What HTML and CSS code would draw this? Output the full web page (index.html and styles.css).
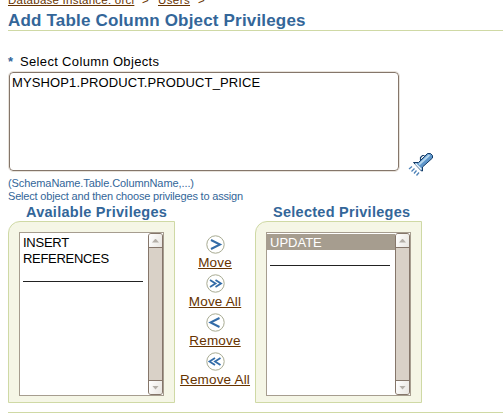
FILE: index.html
```html
<!DOCTYPE html>
<html lang="en">
<head>
<meta charset="utf-8">
<title>Add Table Column Object Privileges</title>
<link rel="stylesheet" href="styles.css">
</head>
<body>
<main class="page">
  <nav class="crumbs"><a class="crumb-db"><span>Database Instance: orcl</span></a><span class="sep">&gt;</span><a class="crumb-users"><span>Users</span></a><span class="sep">&gt;</span></nav>
  <h1><span>Add Table Column Object Privileges</span></h1>
  <div class="field-label"><b>*</b><span>Select Column Objects</span></div>
  <div class="field">
    <div class="textarea"><span>MYSHOP1.PRODUCT.PRODUCT_PRICE</span></div>
    <svg class="torch" width="26" height="26" viewBox="0 0 26 26">
      <path d="M12.500 8V5.500l2-2h2" fill="none" stroke="#1d4470" stroke-width="1.2"/>
      <path d="M5.500 10.500h5L19.500 1.500h3l2 2v2.500L14.500 15v4h-1z" fill="#5f96ca" stroke="#123a66"/>
      <path d="M11 12.500L21.500 3" stroke="#b6d7ee" stroke-width="2"/>
      <path d="M7.500 11.500l6 6" stroke="#eef7fd" stroke-width="1.5"/>
      <path d="M4 14.500l-3 2.500M6.500 16.500l-3 3M8.500 18.500l-2.500 3M11 20.500l-2.500 3" stroke="#4f83b8" stroke-width="1.3"/>
    </svg>
  </div>
  <div class="hint hint-format">(SchemaName.Table.ColumnName,...)</div>
  <div class="hint hint-help">Select object and then choose privileges to assign</div>
  <div class="shuttle">
    <section class="side">
      <h2 class="h-available"><span>Available Privileges</span></h2>
      <div class="panel">
        <div class="list">
          <div class="options"><div class="option o-insert"><span>INSERT</span></div><div class="option o-references"><span>REFERENCES</span></div><div class="rule"></div></div>
          <div class="scrollbar"><i class="up"></i><i class="down"></i></div>
        </div>
      </div>
    </section>
    <div class="actions">
      <a class="act a-move"><svg width="19" height="19" viewBox="0 0 19 19"><circle cx="9.5" cy="9.5" r="8.7"/><path class="one" d="M5 5l9 4.500L5 14"/></svg><span>Move</span></a>
      <a class="act a-move-all"><svg width="19" height="19" viewBox="0 0 19 19"><circle cx="9.5" cy="9.5" r="8.7"/><path d="M4 6l5.500 3.500L4 13M9.500 6l5.500 3.500-5.500 3.500"/></svg><span>Move All</span></a>
      <a class="act a-remove"><svg width="19" height="19" viewBox="0 0 19 19"><circle cx="9.5" cy="9.5" r="8.7"/><path class="one" d="M13.500 5l-9 4.500 9 4.500"/></svg><span>Remove</span></a>
      <a class="act a-remove-all"><svg width="19" height="19" viewBox="0 0 19 19"><circle cx="9.5" cy="9.5" r="8.7"/><path d="M9 6L3.500 9.500 9 13M14.500 6L9 9.500l5.500 3.500"/></svg><span>Remove All</span></a>
    </div>
    <section class="side">
      <h2 class="h-selected"><span>Selected Privileges</span></h2>
      <div class="panel">
        <div class="list">
          <div class="options"><div class="option o-update selected"><span>UPDATE</span></div><div class="rule"></div></div>
          <div class="scrollbar"><i class="up"></i><i class="down"></i></div>
        </div>
      </div>
    </section>
  </div>
  <hr>
</main>
</body>
</html>
```
FILE: styles.css
```css
* { box-sizing: border-box; }
body { margin: 0; background: #fff; overflow: hidden; font: 13px/16px "Liberation Sans", Arial, sans-serif; color: #000; }
.page { height: 418px; padding-left: 8px; overflow: hidden; white-space: nowrap; }
.crumbs { display: flex; height: 7px; margin-bottom: 4px; font-size: 11.5px; line-height: 12px; color: #663300; }
.crumbs > * { margin-top: -6px; }
.crumbs a { text-decoration: underline; text-underline-offset: 1px; text-decoration-thickness: 1px; }
.crumb-db { width: 126px; letter-spacing: .24px; }
.crumb-users { width: 32px; letter-spacing: .4px; }
.sep { width: 24px; padding-left: 8px; }
h1 { height: 20px; margin: 0; border-bottom: 1px solid #cfd9a5; font-size: 17px; line-height: 19px; color: #336699; letter-spacing: .18px; }
.field-label { display: flex; height: 40px; padding-top: 23px; line-height: 16px; letter-spacing: .34px; }
.field-label b { width: 12px; color: #336699; }
.field { display: flex; height: 101px; }
.textarea { width: 390px; height: 99px; margin: 1px; padding: 2px; border: 1px solid #85766a; border-radius: 4px; outline: 1px solid #e8e3dc; letter-spacing: .12px; }
.torch { margin: 81px 0 0 8px; }
.hint { height: 13px; font-size: 11px; line-height: 13px; color: #336699; }
.hint-format { margin-top: 5px; letter-spacing: -.09px; }
.hint-help { letter-spacing: -.18px; }
.shuttle { display: flex; margin-top: 2px; height: 198px; }
.side { width: 167px; }
h2 { height: 16px; margin: 0; padding-left: 18px; font-size: 14.5px; line-height: 14px; color: #336699; letter-spacing: .27px; }
.panel { width: 167px; height: 182px; padding: 10px; border: 1px solid #cfd9a5; border-top-left-radius: 12px; background: #f5f6e6; }
.list { display: flex; width: 145px; height: 164px; border: 1px solid #a69d8f; background: #fff; }
.options { width: 128px; padding-top: 1px; }
.option { height: 16px; padding-left: 3px; line-height: 17px; }
.o-insert { letter-spacing: -.25px; }
.o-references { letter-spacing: -.3px; }
.selected { background: #a69d8f; color: #fff; }
.rule { width: 120px; height: 1px; margin: 15px 0 0 3px; background: #222; }
.scrollbar { display: flex; flex-direction: column; justify-content: space-between; width: 15px; border: 1px solid #85766a; background: #d9d1c7; border-radius: 3px; }
.scrollbar i { display: flex; align-items: center; justify-content: center; width: 13px; height: 14px; background: linear-gradient(110deg, #fff, #e9e6e1); }
.scrollbar i::before { content: ""; width: 7px; height: 4px; background: #b4afa8; }
.scrollbar .up { border-bottom: 1px solid #85766a; border-radius: 2px 2px 0 0; }
.scrollbar .down { border-top: 1px solid #85766a; border-radius: 0 0 2px 2px; }
.up::before { clip-path: polygon(50% 0, 100% 100%, 0 100%); }
.down::before { clip-path: polygon(0 0, 100% 0, 50% 100%); }
.actions { width: 80px; padding-top: 30px; }
.act { display: flex; flex-direction: column; align-items: center; height: 39px; color: #663300; font-size: 13.5px; letter-spacing: .18px; }
.act svg { flex: none; fill: none; stroke: #336ca8; stroke-width: 1.8; }
.act circle { fill: #fff; stroke: #a7aa91; stroke-width: 1; }
.act .one { stroke-width: 2; }
.act span { margin-top: 1px; line-height: 16px; text-decoration: underline; text-underline-offset: 1px; text-decoration-thickness: 1px; }
hr { width: 495px; height: 1px; margin: 9px 0 0; border: 0; background: #cfd9a5; }
```
